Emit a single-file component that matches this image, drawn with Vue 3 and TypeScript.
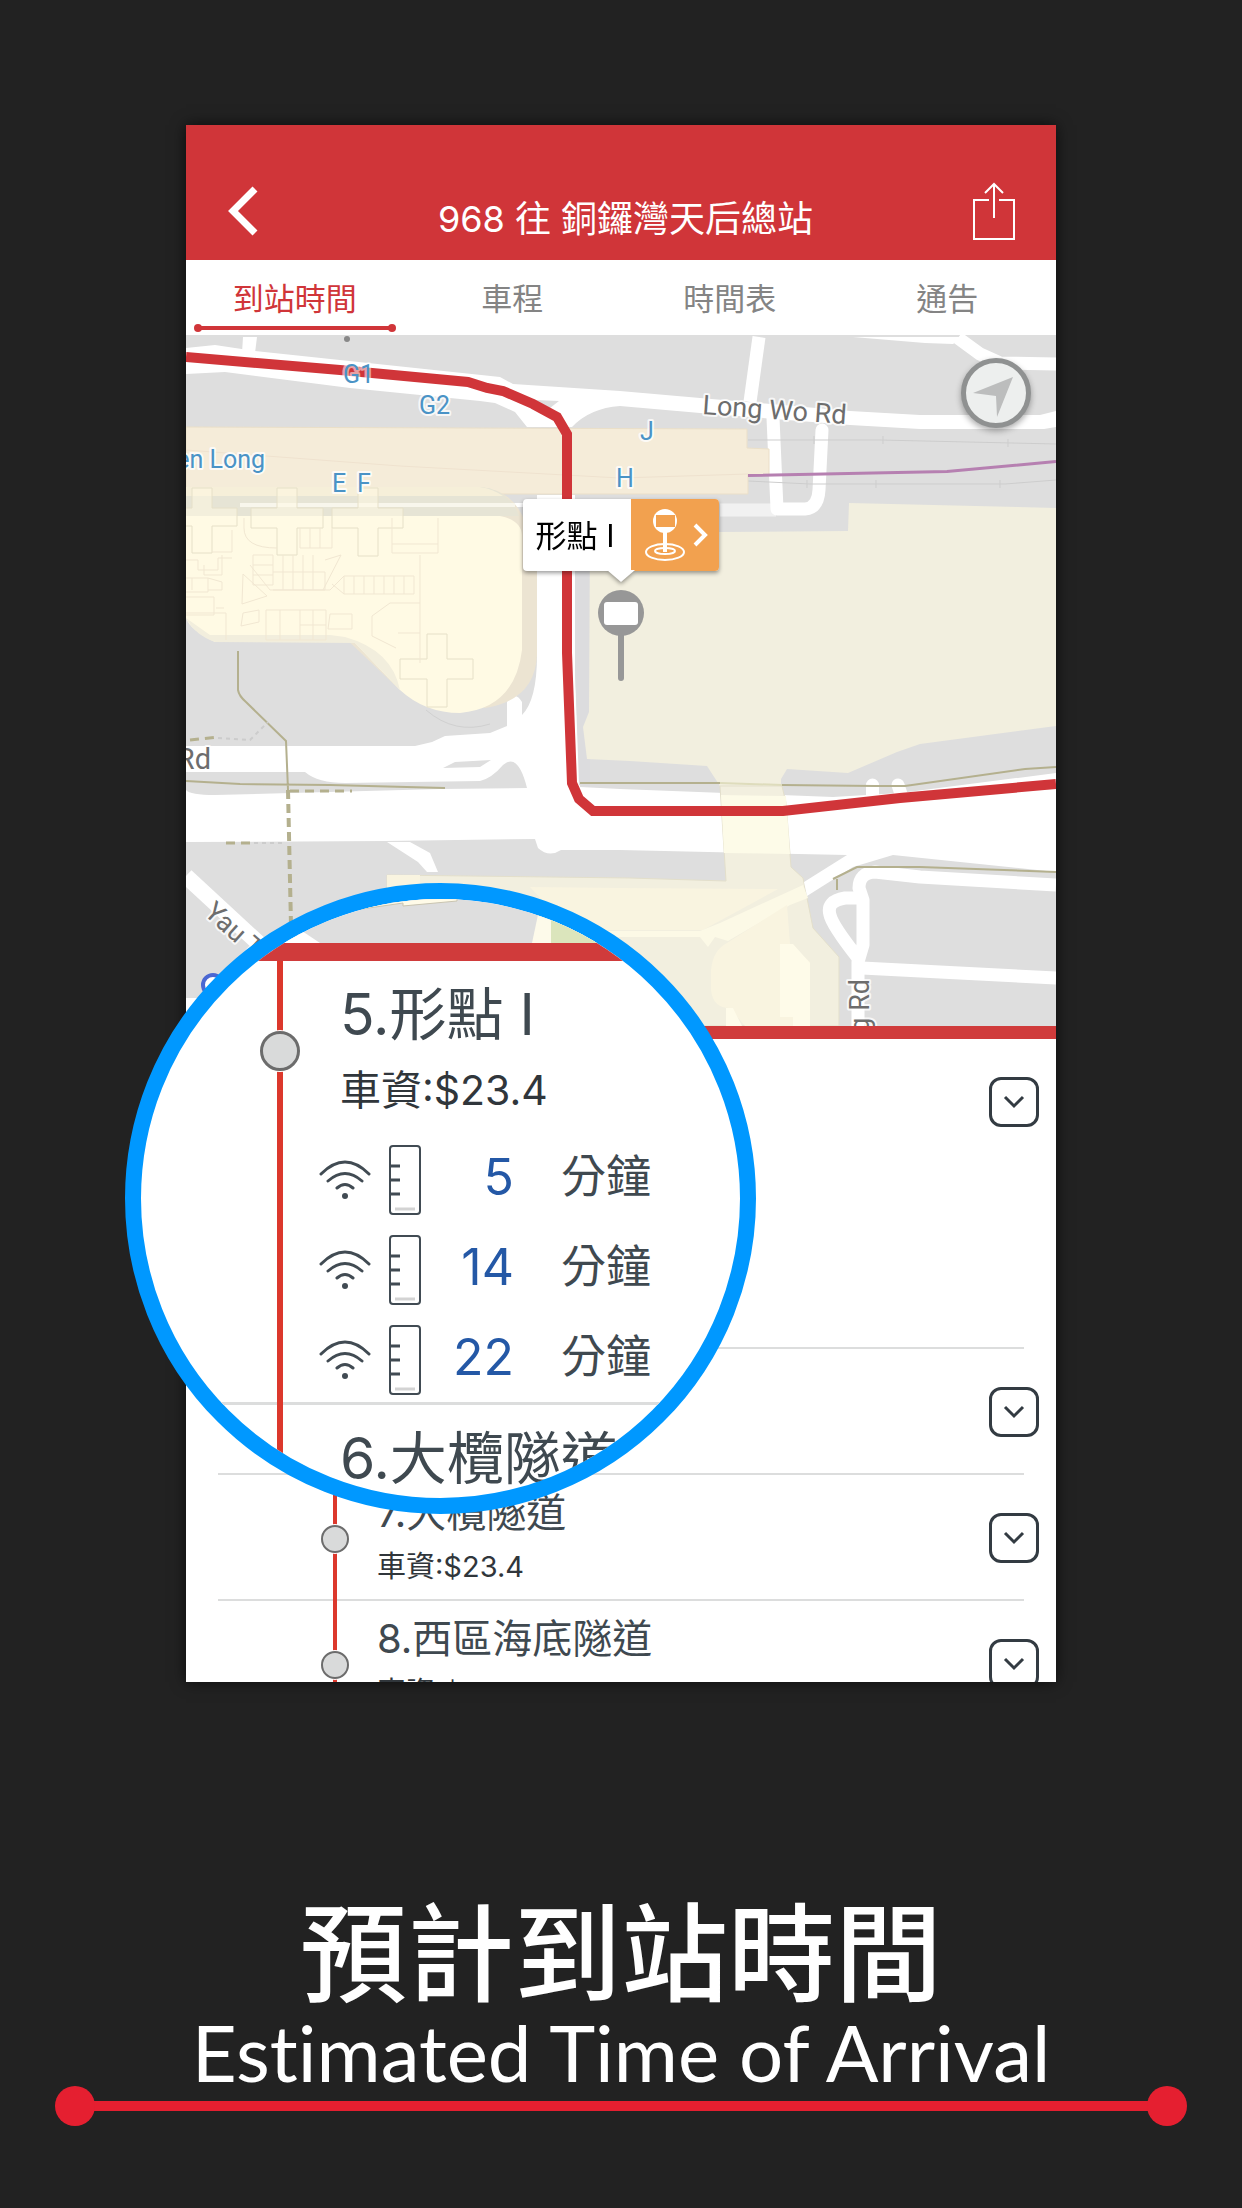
<script setup lang="ts">
interface Stop {
  no: number
  name?: string
  fare?: string
  tall?: boolean
}

const tabs: string[] = ['到站時間', '車程', '時間表', '通告']

const stops: Stop[] = [
  { no: 5, tall: true },
  { no: 6 },
  { no: 7, name: '大欖隧道', fare: '$23.4' },
  { no: 8, name: '西區海底隧道', fare: '$9.9' },
]

const arrivals: number[] = [5, 14, 22]
</script>

<template>
  <main class="poster">
    <div class="stage">
      <section class="phone">
        <header class="bar">
          <button class="plain back" aria-label="返回">
            <svg width="30" height="50" viewBox="0 0 30 50"><path d="M27 3 5 25l22 22" fill="none" stroke="#fff" stroke-width="7" /></svg>
          </button>
          <h1>968 往 銅鑼灣天后總站</h1>
          <button class="plain" aria-label="分享">
            <svg width="42" height="58" viewBox="0 0 42 58" fill="none" stroke="#fff" stroke-width="2">
              <path d="M16 18H1v39h40V18H26M21 36V2M12 11l9-9 9 9" />
            </svg>
          </button>
        </header>

        <nav class="tabs">
          <a v-for="(tab, i) in tabs" :key="tab" href="#" :class="{ active: i === 0 }">
            {{ tab }}<span v-if="i === 0" class="marker"></span>
          </a>
        </nav>

        <div class="map">
          <svg class="canvas" viewBox="186 335 870 691" preserveAspectRatio="xMidYMid slice">
            <rect x="186" y="335" width="870" height="691" fill="#dedede" />
            <!-- northern roads -->
            <g fill="#fff">
              <path d="M243 337h14l-2 16h-13z" />
              <path d="M186 348 215 345 255 351 500 377 513 384 620 391 700 398 850 411 920 415 1040 415 1056 411V427L1044 429 920 429 850 425 700 413 620 406 Q590 408 572 427H527L515 412 495 403 480 401 350 388 225 372 186 374z" />
              <path d="M853 337H965L953 344 925 343z" />
            </g>
            <path d="M535 400 559 401 550 408z" fill="#dedede" />
            <path d="M720 510H776" stroke="#f1f1f1" stroke-width="13" />
            <g fill="none" stroke="#fff" stroke-width="13">
              <path d="M759 337 750 402" />
              <path d="M958 338 980 354 1000 363 1056 364" />
              <path d="M773 418 777 509H805Q818 508 819 490L822 430" stroke-linejoin="round" stroke-linecap="round" />
            </g>
            <g fill="none" stroke="#cdcdcd" stroke-width="1">
              <path d="M748 440 880 440 1056 444M748 481 810 484H1005L1056 480M814 436v8M883 436v8M1008 439v8M807 480v8M876 480v8M1000 480v8" />
            </g>

            <!-- main roads -->
            <path fill="#fff" d="M186 746H415L432 742 445 736 490 733 507 726V702Q515 690 522 702V715Q537 700 537 655V495H575V670L580 787 620 789 833 797 900 793 1056 773V872L893 855H847L620 850H561Q549 858 538 848L535 839 385 841 186 842z" />
            <path d="M575 495V670L579 785 590 787V495z" fill="#dcdcde" />
            <path d="M186 772H305Q318 783 345 783L480 781 Q492 778 503 765 Q518 752 527 788L440 789 215 795Q190 795 186 790zM443 768 455 762 491 760 480 767z" fill="#dedede" />
            <path d="M387 842H410L430 853 438 872H427L418 862z" fill="#fff" />
            <path d="M186 876 320 1000" stroke="#fff" stroke-width="16" />
            <path d="M186 998H205V1026H186z" fill="#fff" />

            <!-- station -->
            <path d="M186 427 747 429V448L769 449V475H748V494H186z" fill="#f5ecd9" stroke="#eadfc8" />
            <path d="M186 450 400 466 620 478 748 474" fill="none" stroke="#efe2cf" />
            <path d="M748 475.500 947 471.500 1056 461.500" fill="none" stroke="#b680b1" stroke-width="3" />
            <path d="M240 505H530" stroke="#fff" stroke-width="4" />

            <!-- housing estate -->
            <path d="M186 487H480Q515 490 526 525L537 570V655Q535 700 485 708L455 690 400 690z" fill="#ece4d2" />
            <path d="M186 487H480Q510 490 519 516H186z" fill="#e6e4d5" />
            <path d="M186 487H480Q493 489 503 496H186z" fill="#f6efd9" />
            <path d="M240 505H515" stroke="#f8f6ec" stroke-width="4" />
            <path d="M186 516H500Q521 520 522 535V650Q515 708 460 713Q425 713 400 690L355 643Q340 637 320 637L215 642Q190 630 186 618z" fill="#fffae4" />
            <path d="M186 618Q195 635 215 642L355 643 400 690Q392 650 345 637L330 635H210z" fill="#f2eedd" />
            <g fill="#fffae4" fill-opacity="0.5" stroke="#e6e0c8">
              <path d="M186 508h6v-20h20v20h25v18h-25v27h-20v-27h-6M277 488h20v20h26v20h-26v27h-20v-27h-26v-20h26zM358 488h20v20h25v20h-25v28h-20v-28h-26v-20h26zM427 634h20v25h26v20h-26v28h-20v-28h-27v-20h27z" />
            </g>
            <g fill="none" stroke="#f1e7d2">
              <path d="M244 518v10q0 20 33 20M300 528v20h32v-20M310 528v20M320 528v20M392 518v35h46v-35M392 544h46M232 530v22h-20M186 560h12v10h20v-12h14M204 565v10h18v-20" />
              <path d="M253 555h20v30h-20zM253 565h20M253 575h20M273 572h52v18h-52M283 555v35M293 555v35M303 555v35M313 555v35M325 560l16-5-18 35M186 578h22v14h-22M192 578v12M208 578l14 4v8h-14M186 597h28v18h-28M216 608h8" />
              <path d="M243 574l24 22-25 8zM250 565l20 25h60l14-14h70v18h-70l-12-10M344 576v18M354 576v18M364 576v18M374 576v18M384 576v18M394 576v18M404 576v18M420 555v78M186 613h40v27M243 613l16-3v12l-18 4zM266 610h60v30h-60zM280 610v30M300 610v30M313 610v30M326 625h-26M330 614h22v15h-24zM420 603h-30l-18 13v20l24 12M398 633h22v30" />
            </g>
            <path d="M426 710Q455 735 490 724" fill="none" stroke="#d0d0d0" />

            <!-- shopping mall -->
            <path d="M590 532 720 532 848 531 849 503 1018 507 1056 508V726L920 744 897 752 848 773 787 769 781 779V790H720V786L707 766 630 761 587 759 583 727 589 712z" fill="#f2efdf" />
            <path d="M387 875 630 878 726 881 720 786H782L786 803 791 867 803 878 813 928 839 957V1026H387z" fill="#f2efdf" stroke="#e3dfcb" />
            <path d="M721 795 786 796 790 854 724 853z" fill="#fdfbe8" />
            <path d="M387 875H420V890H387zM620 888 778 889 703 930H570L530 887z" fill="#f9f4e0" />
            <path d="M600 931H700L720 923 803 885 808 898 790 905 728 941 715 937 708 947 700 937H600z" fill="#fcf9e6" />
            <path d="M727 943 787 905 790 944 810 962V1026H745L730 1008Q713 1008 711 990V970Q713 950 727 943z" fill="#f9f4e0" />
            <path d="M780 944H793L810 963V1026H793V1017H780zM726 1008H733L742 1026H726z" fill="#fefbe9" />

            <!-- southern roads -->
            <path d="M804 882 847 855H893L853 867 807 896z" fill="#fff" />
            <g fill="none" stroke="#fff" stroke-width="13" stroke-linejoin="round">
              <path d="M1056 885 920 877 875 872Q859 873 859 888L863 900V945L858 962V1026" />
              <path d="M862 898H845Q826 901 830 915Q832 925 858 958M862 968 1056 978" />
              <path d="M872.500 785V800M898 785 903 800" stroke-linecap="round" />
            </g>

            <!-- footpaths -->
            <g fill="none" stroke="#b4b08e" stroke-width="2">
              <path d="M238 651V690Q239 696 246 702L286 741 288 790M186 781 240 784 330 785 445 788M580 783H720M782 785 875 786H905L1025 769 1056 767M833 879 857 867 920 867 1056 872M837 879V890" />
              <path d="M720 783 782 785" stroke="#dedcbc" />
              <path d="M288 790 291 925" stroke-width="4" stroke-dasharray="9 5" />
              <path d="M290 791H352M190 740 218 737M226 843H254" stroke-dasharray="9 6" stroke-width="3" />
              <path d="M218 738 250 740 268 722M254 843H286" stroke="#ccc" stroke-dasharray="4 4" />
            </g>

            <!-- bus route -->
            <path d="M186 357 340 370 468 382 487 388 503 391 533 404 557 417 567 434V653L572 783 579 799 593 811H783L900 798 1056 784" fill="none" stroke="#d03539" stroke-width="10" />
            <circle cx="347" cy="339" r="3" fill="#888" />
            <circle cx="213" cy="985" r="10" fill="#fff" stroke="#4b67d2" stroke-width="4" />

            <g class="exit" font-size="25">
              <text x="343" y="383" class="faint">G1</text>
              <text x="419" y="414">G2</text>
              <text x="265" y="468" text-anchor="end">Yuen Long</text>
              <text x="332" y="492">E</text>
              <text x="357" y="492">F</text>
              <text x="640" y="440">J</text>
              <text x="616" y="487">H</text>
            </g>
            <g class="road" font-size="27">
              <text transform="translate(702 414) rotate(4)">Long Wo Rd</text>
              <text x="211" y="769" text-anchor="end" font-size="29">Rd</text>
              <text transform="translate(203 914) rotate(42)">Yau Tin</text>
              <text transform="translate(869 979) rotate(-90)" text-anchor="end">Hong Rd</text>
            </g>

            <!-- stop pin -->
            <path d="M621 630V678" stroke="#979797" stroke-width="6" stroke-linecap="round" />
            <circle cx="621" cy="613" r="23" fill="#979797" />
            <rect x="604" y="602" width="34" height="23" rx="3" fill="#fff" />
          </svg>

          <button class="locate" aria-label="定位">
            <svg width="60" height="60" viewBox="0 0 60 60"><path d="M47 14 7 30l23 3 1 21z" fill="#bcbdbd" /></svg>
          </button>

          <button class="callout">
            <span class="place">形點 I</span>
            <span class="go">
              <svg width="88" height="72" viewBox="0 0 88 72" fill="none" stroke="#fff">
                <circle cx="34" cy="22" r="12" fill="#fff" stroke="none" />
                <rect x="25" y="16" width="19" height="12" fill="#f2a14f" stroke="none" />
                <path d="M34 33v20" stroke-width="4" />
                <ellipse cx="34" cy="53" rx="19" ry="8" stroke-width="2" />
                <ellipse cx="34" cy="52" rx="10" ry="3" stroke-width="2" />
                <path d="m64 26 10 10-10 10" stroke-width="4" />
              </svg>
            </span>
          </button>
        </div>

        <ul class="stops">
          <li v-for="stop in stops" :key="stop.no" :class="{ tall: stop.tall }">
            <div class="rail"><i></i></div>
            <div class="info">
              <template v-if="stop.name">
                <h2>{{ stop.no }}.{{ stop.name }}</h2>
                <p>車資:{{ stop.fare }}</p>
              </template>
            </div>
            <button class="expand" aria-label="展開">
              <svg width="22" height="16" viewBox="0 0 22 16"><path d="m2 3 9 9 9-9" fill="none" stroke="#333b42" stroke-width="3" /></svg>
            </button>
          </li>
        </ul>
      </section>

      <section class="lens">
        <svg class="lens-map" viewBox="141 899 599 44">
          <rect x="141" y="899" width="599" height="44" fill="#dedede" />
          <path d="M355 910 403 903V906L457 901V890H355z" fill="#fffbe8" stroke="#c9c4b0" />
          <path d="M539 910 532 943H640V899z" fill="#fdfaea" />
          <path d="M551 915V943H640V915z" fill="#dbe5bc" />
          <path d="M290 923 320 943H270z" fill="#fff" />
        </svg>
        <ul class="zoomed">
          <li>
            <div class="rail"><i></i></div>
            <div class="info">
              <h2>5.形點 I</h2>
              <p>車資:$23.4</p>
              <ol>
                <li v-for="minutes in arrivals" :key="minutes">
                  <svg width="52" height="42" viewBox="0 0 52 42" fill="none" stroke="#414b53" stroke-width="3" stroke-linecap="round">
                    <path d="M2 15Q26-9 50 15M9 22q17-15 34 0M18 29q8-7 16 0" />
                    <circle cx="26" cy="37" r="3" fill="#414b53" stroke="none" />
                  </svg>
                  <svg class="ruler" width="32" height="70" viewBox="0 0 32 70" fill="none" stroke="#414b53" stroke-width="2">
                    <rect x="1" y="1" width="30" height="68" rx="3" />
                    <path d="M1 21h10M1 35h10M1 49h10" stroke-width="3" />
                    <path d="M6 64h20" stroke="#d3d3d3" stroke-width="3" />
                  </svg>
                  <strong>{{ minutes }}</strong>
                  <span>分鐘</span>
                </li>
              </ol>
            </div>
          </li>
          <li>
            <div class="rail bare"></div>
            <div class="info"><h2>6.大欖隧道</h2></div>
          </li>
        </ul>
      </section>
    </div>

    <footer class="caption">
      <p class="zh" lang="zh-Hant">預計到站時間</p>
      <p class="en" lang="en">Estimated Time of Arrival</p>
      <div class="rule"></div>
    </footer>
  </main>
</template>

<style>
body {
  background: #222;
}
</style>

<style scoped>
.poster {
  box-sizing: border-box;
  min-height: 100vh;
  padding-top: 125px;
  overflow: hidden;
  background: #222;
  font-family: Inter, 'Noto Sans CJK TC', sans-serif;
}

h1, h2, p, ul, ol {
  margin: 0;
  padding: 0;
  font-weight: 400;
  list-style: none;
}

button {
  padding: 0;
  border: 0;
  background: none;
  font-family: inherit;
}

svg {
  display: block;
}

.stage {
  position: relative;
  margin: 0 186px;
}

.phone {
  display: flex;
  flex-direction: column;
  aspect-ratio: 870 / 1557;
  overflow: hidden;
  background: #fff;
  box-shadow: 0 0 14px #000a;
}

.bar {
  display: flex;
  flex: none;
  align-items: flex-end;
  box-sizing: border-box;
  height: 135px;
  padding: 0 41px 20px 42px;
  background: #d03539;
  color: #fff;
}

.back {
  padding-bottom: 4px;
}

.bar h1 {
  flex: 1;
  padding-left: 20px;
  font-size: 36px;
  line-height: 42px;
  text-align: center;
}

.tabs {
  display: flex;
  flex: none;
  height: 75px;
}

.tabs a {
  position: relative;
  flex: 1;
  color: #848484;
  font-size: 31px;
  line-height: 78px;
  text-align: center;
  text-decoration: none;
}

.tabs .active {
  color: #d03539;
}

.marker {
  position: absolute;
  right: 12px;
  bottom: 5px;
  left: 12px;
  height: 4px;
  background: #d03539;
}

.marker::before,
.marker::after {
  position: absolute;
  top: -2px;
  left: -4px;
  width: 8px;
  height: 8px;
  border-radius: 50%;
  background: #d03539;
  content: '';
}

.marker::after {
  right: -4px;
  left: auto;
}

.map {
  position: relative;
  flex: none;
  border-bottom: 13px solid #d03b3b;
}

.canvas {
  width: 100%;
  font-family: Roboto, sans-serif;
}

.exit {
  fill: #4a93c6;
}

.road {
  fill: #6d6d6d;
}

.exit text,
.road text {
  paint-order: stroke;
  stroke: #fffc;
  stroke-width: 4px;
  stroke-linejoin: round;
}

.exit .faint {
  stroke: #fff8;
}

.locate {
  position: absolute;
  top: 23px;
  right: 25px;
  box-sizing: border-box;
  width: 70px;
  height: 70px;
  border: 5px solid #8f9191;
  border-radius: 50%;
  background: #edefee;
  box-shadow: 0 3px 6px #0005;
}

.callout {
  position: absolute;
  top: 164px;
  left: 337px;
  display: flex;
  height: 72px;
  border-radius: 4px;
  background: #fff;
  filter: drop-shadow(0 2px 2px #0006);
}

.callout::after {
  position: absolute;
  top: 71px;
  left: 84px;
  width: 28px;
  height: 12px;
  background: #fff;
  clip-path: polygon(0 0, 100% 0, 50% 100%);
  content: '';
}

.place {
  width: 104px;
  padding-right: 4px;
  color: #000;
  font-size: 31px;
  line-height: 74px;
  text-align: center;
}

.go {
  overflow: hidden;
  border-radius: 0 4px 4px 0;
  background: #f2a14f;
}

.stops > li {
  display: flex;
  align-items: flex-start;
  min-height: 124px;
  margin: 0 32px;
  border-bottom: 2px solid #dcdddd;
}

.stops > .tall {
  min-height: 308px;
}

.rail {
  align-self: stretch;
  box-sizing: border-box;
  width: 28px;
  margin: 0 0 -2px 103px;
  padding-top: 50px;
  background: linear-gradient(#dc382c, #dc382c) center / 4px 100% no-repeat;
}

.rail i {
  display: block;
  box-sizing: border-box;
  height: 28px;
  border: 2px solid #6c6c6c;
  border-radius: 50%;
  background: #d9dada;
  box-shadow: 0 0 0 1px #fff;
}

.info {
  flex: 1;
  margin-left: 28px;
  color: #3f4950;
}

.info h2 {
  margin-top: 10px;
  font-size: 40px;
  line-height: 56px;
}

.info p {
  color: #30363b;
  font-size: 29px;
  line-height: 52px;
}

.expand {
  display: flex;
  align-items: center;
  justify-content: center;
  box-sizing: border-box;
  width: 50px;
  height: 50px;
  margin: 38px -15px 0 0;
  border: 3px solid #333b42;
  border-radius: 12px;
}

.lens {
  position: absolute;
  top: 758px;
  left: -61px;
  box-sizing: border-box;
  width: 631px;
  height: 631px;
  overflow: hidden;
  border: 16px solid #0098ff;
  border-radius: 50%;
  background: #fff;
}

.lens-map {
  width: 100%;
  height: 44px;
}

.zoomed {
  border-top: 18px solid #d03b3b;
}

.zoomed > li {
  display: flex;
  padding-left: 119px;
  border-bottom: 3px solid #dcdddd;
}

.zoomed .rail {
  width: 40px;
  margin: 0 0 -3px;
  padding-top: 70px;
  background-size: 6px 100%;
}

.zoomed .rail i {
  height: 40px;
  border-width: 3px;
}

.zoomed .info {
  margin-left: 40px;
  padding-bottom: 7px;
  white-space: nowrap;
}

.zoomed h2 {
  margin-top: 14px;
  font-size: 57px;
  line-height: 80px;
}

.zoomed p {
  margin-bottom: 20px;
  font-size: 41px;
  line-height: 70px;
}

.zoomed ol {
  display: grid;
  gap: 20px;
  margin-left: -21px;
}

.zoomed ol li {
  display: flex;
  align-items: center;
  height: 70px;
}

.ruler {
  margin-left: 18px;
}

.zoomed strong {
  width: 93px;
  padding-bottom: 6px;
  color: #2458a6;
  font-size: 50px;
  font-weight: 400;
  line-height: 64px;
  text-align: right;
}

.zoomed ol span {
  margin-left: 47px;
  padding-bottom: 6px;
  font-size: 45px;
  line-height: 64px;
}

.caption {
  margin: 206px 55px 0;
  color: #fff;
  text-align: center;
}

.zh {
  margin-bottom: 12px;
  font-family: 'Noto Sans CJK TC', sans-serif;
  font-size: 107px;
  font-weight: 500;
  line-height: 118px;
  white-space: nowrap;
}

.en {
  font-family: Lato, sans-serif;
  font-size: 78px;
  font-variant-ligatures: none;
  line-height: 68px;
  white-space: nowrap;
}

.rule {
  display: flex;
  align-items: center;
  justify-content: space-between;
  height: 40px;
  background: linear-gradient(#e51f30, #e51f30) center / calc(100% - 40px) 10px no-repeat;
}

.rule::before,
.rule::after {
  width: 40px;
  height: 40px;
  border-radius: 50%;
  background: #e51f30;
  content: '';
}
</style>
